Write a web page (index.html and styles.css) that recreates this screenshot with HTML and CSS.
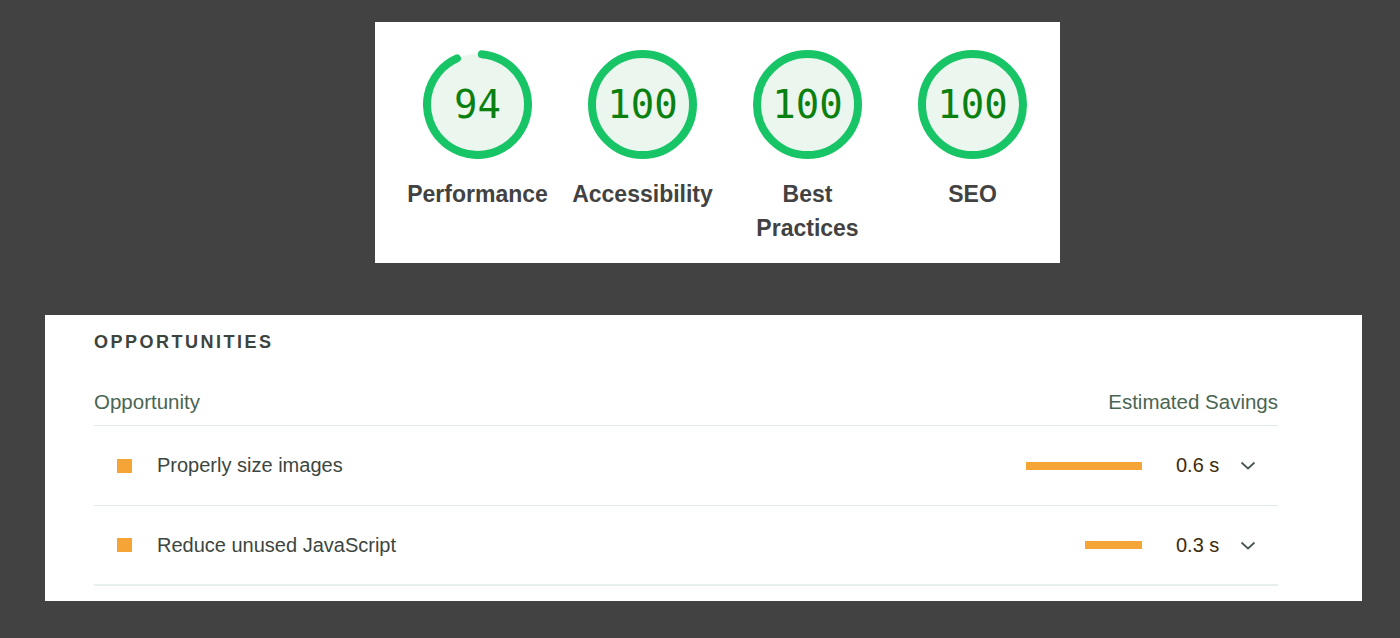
FILE: index.html
```html
<!DOCTYPE html>
<html lang="en">
<head>
<meta charset="utf-8">
<title>Lighthouse report</title>
<link rel="stylesheet" href="styles.css">
</head>
<body>
<section class="scores">
  <div class="gauge">
    <div class="ring">
      <svg class="ring-svg" width="109" height="109" viewBox="0 0 109 109">
        <circle cx="54.5" cy="54.5" r="50.5" fill="#ebf6ee"/>
        <path d="M 58.9 4.19 A 50.5 50.5 0 1 1 33.96 8.37" fill="none" stroke="#18c566" stroke-width="8" stroke-linecap="round"/>
      </svg>
      <span class="score">94</span>
    </div>
    <div class="label">Performance</div>
  </div>
  <div class="gauge">
    <div class="ring">
      <svg class="ring-svg" width="109" height="109" viewBox="0 0 109 109">
        <circle cx="54.5" cy="54.5" r="50.5" fill="#ebf6ee" stroke="#18c566" stroke-width="8"/>
      </svg>
      <span class="score">100</span>
    </div>
    <div class="label">Accessibility</div>
  </div>
  <div class="gauge">
    <div class="ring">
      <svg class="ring-svg" width="109" height="109" viewBox="0 0 109 109">
        <circle cx="54.5" cy="54.5" r="50.5" fill="#ebf6ee" stroke="#18c566" stroke-width="8"/>
      </svg>
      <span class="score">100</span>
    </div>
    <div class="label">Best Practices</div>
  </div>
  <div class="gauge">
    <div class="ring">
      <svg class="ring-svg" width="109" height="109" viewBox="0 0 109 109">
        <circle cx="54.5" cy="54.5" r="50.5" fill="#ebf6ee" stroke="#18c566" stroke-width="8"/>
      </svg>
      <span class="score">100</span>
    </div>
    <div class="label">SEO</div>
  </div>
</section>

<section class="opps">
  <h2 class="opps-title">OPPORTUNITIES</h2>
  <div class="opps-head">
    <span>Opportunity</span>
    <span>Estimated Savings</span>
  </div>
  <div class="opp-row">
    <span class="marker"></span>
    <span class="opp-name">Properly size images</span>
    <span class="bar-track"><span class="bar" style="width:116px"></span></span>
    <span class="value">0.6 s</span>
    <svg class="chev" width="16" height="9" viewBox="0 0 16 9"><polyline points="1.5,1.5 8,7.5 14.5,1.5" fill="none" stroke="#4a5a50" stroke-width="1.8"/></svg>
  </div>
  <div class="opp-row last">
    <span class="marker"></span>
    <span class="opp-name">Reduce unused JavaScript</span>
    <span class="bar-track"><span class="bar" style="width:57px"></span></span>
    <span class="value">0.3 s</span>
    <svg class="chev" width="16" height="9" viewBox="0 0 16 9"><polyline points="1.5,1.5 8,7.5 14.5,1.5" fill="none" stroke="#4a5a50" stroke-width="1.8"/></svg>
  </div>
</section>
</body>
</html>
```

FILE: styles.css
```css
html, body {
  margin: 0;
  padding: 0;
}
body {
  background: #424242;
  width: 1400px;
  height: 638px;
  overflow: hidden;
  padding-top: 22px;
  box-sizing: border-box;
  font-family: "Liberation Sans", Arial, sans-serif;
}

.scores {
  margin-left: 375px;
  width: 685px;
  height: 241px;
  box-sizing: border-box;
  background: #ffffff;
  padding: 28px 0 0 20px;
  display: grid;
  grid-template-columns: repeat(4, 165px);
  align-items: start;
}
.gauge {
  display: flex;
  flex-direction: column;
  align-items: center;
}
.ring {
  display: grid;
  width: 109px;
  height: 109px;
  place-items: center;
}
.ring-svg {
  grid-area: 1 / 1;
  display: block;
}
.score {
  grid-area: 1 / 1;
  font-family: "DejaVu Sans Mono", monospace;
  font-size: 39px;
  color: #0a800e;
  line-height: 1;
}
.label {
  margin-top: 18px;
  max-width: 146px;
  text-align: center;
  font-size: 23px;
  line-height: 34px;
  font-weight: 700;
  color: #424242;
}

.opps {
  margin: 52px 0 0 45px;
  width: 1317px;
  height: 286px;
  box-sizing: border-box;
  background: #ffffff;
  padding: 16px 84px 0 49px;
}
.opps-title {
  margin: 0;
  font-size: 18px;
  line-height: 22px;
  font-weight: 700;
  letter-spacing: 2.5px;
  color: #3c443e;
}
.opps-head {
  margin-top: 37px;
  display: flex;
  justify-content: space-between;
  font-size: 20.5px;
  line-height: 24px;
  color: #4a6552;
  padding-bottom: 11px;
  border-bottom: 1px solid #e1ece5;
}
.opp-row {
  display: flex;
  align-items: center;
  height: 79px;
  border-bottom: 1px solid #e1ece5;
  padding: 0 22px 0 23px;
  font-size: 20px;
  color: #3c4640;
}
.opp-row.last {
  height: 78px;
  border-bottom: 2px solid #e8f0eb;
}
.marker {
  width: 15px;
  height: 14px;
  background: #f4a536;
  margin-right: 25px;
  flex: none;
}
.opp-name {
  flex: 1;
}
.bar-track {
  display: flex;
  justify-content: flex-end;
  width: 120px;
}
.bar {
  height: 8px;
  background: #f4a536;
}
.value {
  margin-left: 34px;
  color: #3d2c0c;
  width: 44px;
}
.chev {
  margin-left: 20px;
  display: block;
}
```
